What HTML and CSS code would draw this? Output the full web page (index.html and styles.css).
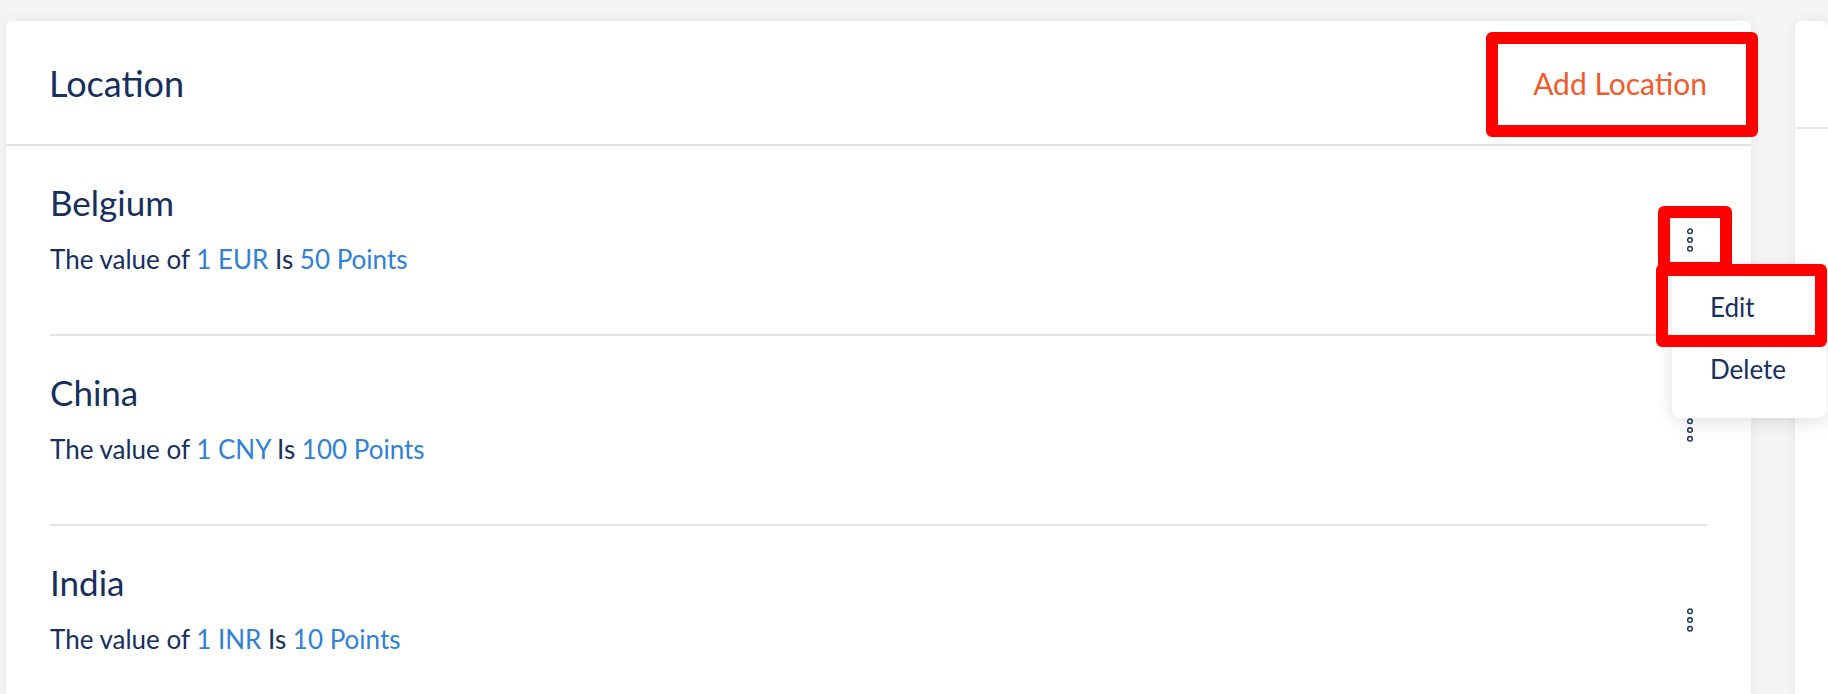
FILE: index.html
```html
<!DOCTYPE html>
<html lang="en">
<head>
<meta charset="utf-8">
<title>Location</title>
<link rel="stylesheet" href="styles.css">
</head>
<body>
<div class="page">
  <section class="card main-card">
    <header class="card-head">
      <h1 class="card-title">Location</h1>
      <button class="add-btn" type="button">Add Location</button>
    </header>
    <ul class="loc-list">
      <li class="loc-row">
        <div class="loc-info">
          <h2 class="loc-name">Belgium</h2>
          <p class="loc-rate">The value of <span class="hl">1 EUR</span> Is <span class="hl">50 Points</span></p>
        </div>
        <button class="kebab" type="button" aria-label="More">
          <svg width="10" height="28" viewBox="0 0 10 28"><circle cx="5" cy="5.3" r="2.3"/><circle cx="5" cy="14" r="2.3"/><circle cx="5" cy="22.7" r="2.3"/></svg>
        </button>
      </li>
      <li class="loc-row">
        <div class="loc-info">
          <h2 class="loc-name">China</h2>
          <p class="loc-rate">The value of <span class="hl">1 CNY</span> Is <span class="hl">100 Points</span></p>
        </div>
        <button class="kebab" type="button" aria-label="More">
          <svg width="10" height="28" viewBox="0 0 10 28"><circle cx="5" cy="5.3" r="2.3"/><circle cx="5" cy="14" r="2.3"/><circle cx="5" cy="22.7" r="2.3"/></svg>
        </button>
      </li>
      <li class="loc-row">
        <div class="loc-info">
          <h2 class="loc-name">India</h2>
          <p class="loc-rate">The value of <span class="hl">1 INR</span> Is <span class="hl">10 Points</span></p>
        </div>
        <button class="kebab" type="button" aria-label="More">
          <svg width="10" height="28" viewBox="0 0 10 28"><circle cx="5" cy="5.3" r="2.3"/><circle cx="5" cy="14" r="2.3"/><circle cx="5" cy="22.7" r="2.3"/></svg>
        </button>
      </li>
    </ul>
  </section>
  <aside class="card side-card">
    <div class="side-head"></div>
  </aside>

  <div class="menu">
    <div class="menu-item">Edit</div>
    <div class="menu-item">Delete</div>
  </div>

  <div class="mark mark-add"></div>
  <div class="mark mark-kebab"></div>
  <div class="mark mark-edit"></div>
</div>
</body>
</html>
```

FILE: styles.css
```css
* { box-sizing: border-box; }

html, body {
  margin: 0;
  padding: 0;
  height: 694px;
  overflow: hidden;
  background: #f5f5f5;
  font-family: Lato, "Open Sans", "Liberation Sans", sans-serif;
  color: #172f5d;
}

.page {
  position: relative;
  display: flex;
  gap: 44px;
  padding: 21px 0 0 6px;
  height: 694px;
}

.card {
  background: #ffffff;
  border-radius: 6px 6px 0 0;
  box-shadow: 0 0 14px rgba(0, 0, 0, 0.07);
}

.main-card {
  width: 1745px;
  flex: none;
}

.side-card {
  flex: 1;
}

.side-head {
  height: 108px;
  border-bottom: 2px solid #e4e4e4;
}

.card-head {
  height: 125px;
  display: flex;
  align-items: center;
  justify-content: space-between;
  padding: 0 44px 0 43px;
  border-bottom: 2px solid #e2e2e2;
}

.card-title {
  margin: 0;
  font-size: 36px;
  font-weight: 400;
  line-height: normal;
  color: #172f5d;
}

.add-btn {
  border: 0;
  background: none;
  padding: 0;
  font-family: inherit;
  font-size: 30px;
  line-height: normal;
  color: #f15a2b;
  cursor: pointer;
}

.loc-list {
  list-style: none;
  margin: 0;
  padding: 0 44px;
}

.loc-row {
  display: flex;
  align-items: center;
  justify-content: space-between;
  height: 190px;
  border-bottom: 2px solid #e3e3e3;
}

.loc-info {
  align-self: flex-start;
  padding-top: 35px;
}

.loc-name {
  margin: 0 0 21px;
  font-size: 35px;
  font-weight: 400;
  line-height: 42px;
  color: #172f5d;
}

.loc-rate {
  margin: 0;
  font-size: 26px;
  line-height: 31px;
  color: #172f5d;
}

.hl {
  color: #2f80d8;
}

.kebab {
  width: 34px;
  height: 34px;
  padding: 0;
  border: 0;
  background: none;
  display: flex;
  align-items: center;
  justify-content: center;
  cursor: pointer;
}

.kebab svg circle {
  fill: none;
  stroke: #1c3566;
  stroke-width: 1.5;
}

.menu {
  position: absolute;
  left: 1672px;
  top: 266px;
  width: 155px;
  padding: 10px 0 18px;
  background: #ffffff;
  border-radius: 9px;
  box-shadow: 0 4px 18px rgba(0, 0, 0, 0.12);
}

.menu-item {
  height: 62px;
  display: flex;
  align-items: center;
  padding-left: 38px;
  font-size: 26px;
  color: #172f5d;
}

.mark {
  position: absolute;
  border: 12px solid #ff0000;
  border-radius: 6px;
}

.mark-add {
  left: 1486px;
  top: 32px;
  width: 272px;
  height: 105px;
}

.mark-kebab {
  left: 1658px;
  top: 206px;
  width: 74px;
  height: 68px;
}

.mark-edit {
  left: 1656px;
  top: 264px;
  width: 171px;
  height: 83px;
}
```
